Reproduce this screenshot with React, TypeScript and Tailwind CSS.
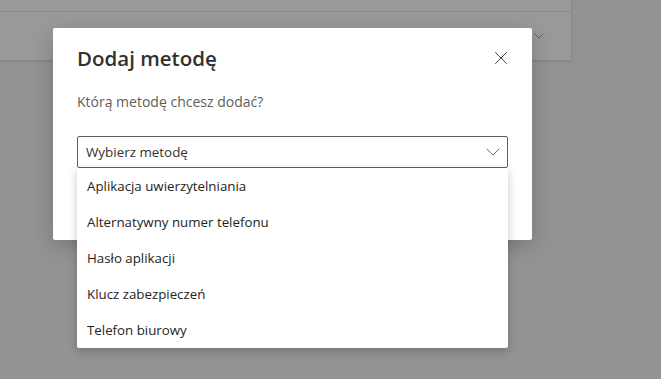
import { X, ChevronDown } from "lucide-react";

const options = [
  "Aplikacja uwierzytelniania",
  "Alternatywny numer telefonu",
  "Hasło aplikacji",
  "Klucz zabezpieczeń",
  "Telefon biurowy",
];

export default function App() {
  return (
    <div
      className="relative w-[661px] h-[379px] overflow-hidden bg-[#939393]"
      style={{ fontFamily: '"Open Sans", "Noto Sans", sans-serif' }}
    >
      {/* tło strony */}
      <div className="w-[571px] bg-[#999999] shadow-[0_1px_3px_rgba(0,0,0,0.15)]">
        <div className="h-[12px] border-b border-[#8c8c8c]" />
        <div className="h-[48px] flex items-center justify-end pr-[24px]">
          <ChevronDown size={16} strokeWidth={1.3} className="text-[#555]" />
        </div>
      </div>

      {/* okno dialogowe */}
      <div className="absolute left-[53px] top-[28px] w-[479px] h-[212px] bg-white rounded-[2px] shadow-[0_6px_20px_rgba(0,0,0,0.2)] px-[24px] pt-[16px]">
        <div className="flex items-center justify-between h-[28px]">
          <h1 className="text-[20.5px] leading-[28px] font-semibold text-[#323130]">
            Dodaj metodę
          </h1>
          <X size={22} strokeWidth={1} className="text-[#323130] mr-[-4px]" />
        </div>
        <p className="mt-[20px] text-[14px] leading-[20px] text-[#605e5c]">
          Którą metodę chcesz dodać?
        </p>
        <div className="relative mt-[24px]">
          <div className="h-[32px] border border-[#605e5c] rounded-[2px] flex items-center justify-between pl-[8px] pr-[2px]">
            <span className="text-[13.4px] text-[#323130]">Wybierz metodę</span>
            <ChevronDown size={24} strokeWidth={0.9} className="text-[#605e5c]" />
          </div>
          <ul className="absolute left-0 right-0 top-[32px] bg-white rounded-[2px] shadow-[0_3px_10px_rgba(0,0,0,0.22)]">
            {options.map((o) => (
              <li
                key={o}
                className="h-[36px] flex items-center pl-[10px] pt-[2px] text-[13.3px] text-[#252423]"
              >
                {o}
              </li>
            ))}
          </ul>
        </div>
      </div>
    </div>
  );
}
